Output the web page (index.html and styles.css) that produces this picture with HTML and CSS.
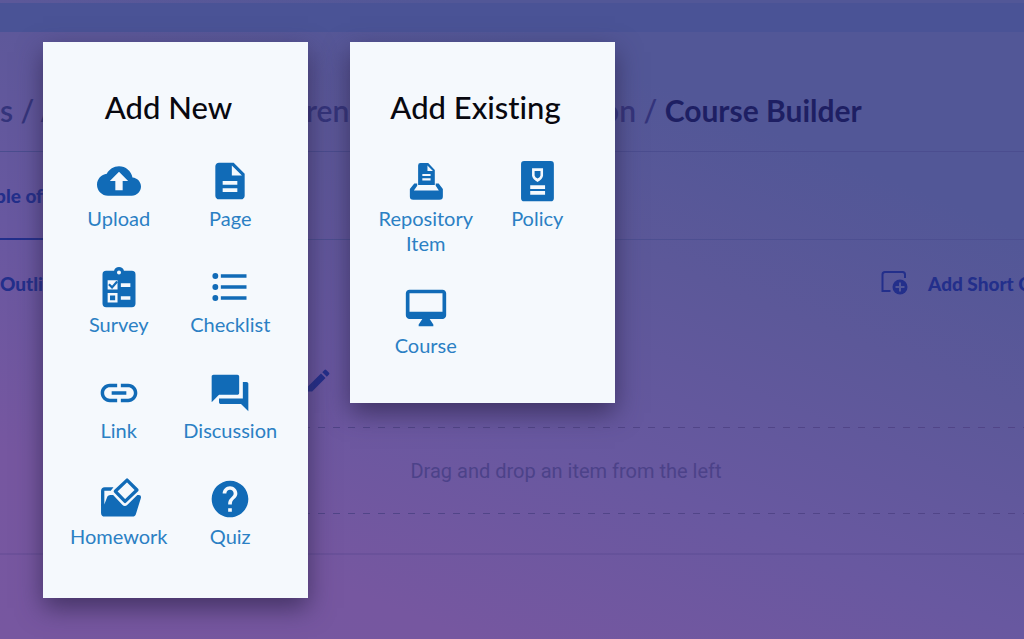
FILE: index.html
```html
<!DOCTYPE html>
<html lang="en">
<head>
<meta charset="utf-8">
<title>Course Builder</title>
<link rel="stylesheet" href="styles.css">
</head>
<body>
<div class="page">
  <div class="topbar"></div>
  <nav class="crumbs" aria-label="Breadcrumb">
    <span class="crumb">s / A</span>
    <span class="crumb">renc</span>
    <span class="crumb">on / <b class="current">Course Builder</b></span>
  </nav>
  <div class="tabs"><a class="tab" href="#">ble of</a></div>
  <div class="toolbar">
    <span class="outline">Outli</span>
    <button class="add-short" type="button">
      <svg class="add-icon" viewBox="0 0 27 24" fill="none" stroke="currentColor" stroke-width="2"><path d="M9.500 20H4L1.500 20V3.500Q1.500 1 4 1H21.500Q24 1 24 3.500V7"/><circle cx="19" cy="16" r="7.500" fill="currentColor" stroke="none"/><path d="M19 11.500v9M14.500 16h9" stroke="#525797"/></svg>
      Add Short C
    </button>
  </div>
  <section class="module">
    <div class="module-head">
      <svg class="pencil" viewBox="0 0 24 24" fill="currentColor"><path d="M3 17.250V21h3.750L17.810 9.940l-3.750-3.750L3 17.250zM20.710 7.040a1 1 0 0 0 0-1.410l-2.340-2.340a1 1 0 0 0-1.410 0l-1.830 1.830 3.750 3.750 1.830-1.830z"/></svg>
    </div>
    <div class="dropzone">Drag and drop an item from the left</div>
  </section>
</div>

<div class="menus">
  <section class="menu">
    <h2 class="menu-title">Add New</h2>
    <div class="grid">
      <button class="item" type="button"><svg class="icon" viewBox="0 0 24 24"><path d="M19.350 10.040C18.670 6.590 15.640 4 12 4 9.110 4 6.600 5.640 5.350 8.040 2.340 8.360 0 10.910 0 14c0 3.310 2.690 6 6 6h13c2.760 0 5-2.240 5-5 0-2.640-2.050-4.780-4.650-4.960zM14 12v5h-4v-5H7l5-5 5 5h-3z"/></svg>Upload</button>
      <button class="item" type="button"><svg class="icon" viewBox="0 0 24 24"><path d="M14 2H6c-1.100 0-2 .9-2 2v16c0 1.100.9 2 2 2h12c1.100 0 2-.9 2-2V8l-6-6zm2 16H8v-2h8v2zm0-4H8v-2h8v2zm-3-5V3.500L18.500 9H13z"/></svg>Page</button>
      <button class="item" type="button"><svg class="icon" viewBox="0 0 24 24"><path fill-rule="evenodd" d="M5 3.200H9.300A2.800 2.800 0 0 1 14.700 3.200H19A2 2 0 0 1 21 5.200V21A2 2 0 0 1 19 23H5A2 2 0 0 1 3 21V5.200A2 2 0 0 1 5 3.200zM12 3a1.100 1.100 0 1 0 0 2.200A1.100 1.100 0 0 0 12 3zM5.800 8.300H11.200V13.300H5.800zM5.800 15.300H11.200V20.500H5.800zM7.100 16.600V19.200H9.900V16.600zM13 10H18.200V12H13zM13 17H18.200V19H13z"/><path d="M6.500 10.500 8.200 12.200 11 9" fill="none" stroke="currentColor" stroke-width="1.200"/></svg>Survey</button>
      <button class="item" type="button"><svg class="icon" viewBox="0 0 24 24"><circle cx="4" cy="6" r="1.600"/><circle cx="4" cy="12" r="1.600"/><circle cx="4" cy="18" r="1.600"/><path d="M7 5h14v2H7zM7 11h14v2H7zM7 17h14v2H7z"/></svg>Checklist</button>
      <button class="item" type="button"><svg class="icon" viewBox="0 0 24 24"><path d="M3.900 12c0-1.710 1.390-3.100 3.100-3.100h4V7H7c-2.760 0-5 2.240-5 5s2.240 5 5 5h4v-1.900H7c-1.710 0-3.100-1.390-3.100-3.100zM8 13h8v-2H8v2zm9-6h-4v1.900h4c1.710 0 3.100 1.390 3.100 3.100s-1.390 3.100-3.100 3.100h-4V17h4c2.760 0 5-2.240 5-5s-2.240-5-5-5z"/></svg>Link</button>
      <button class="item" type="button"><svg class="icon" viewBox="0 0 24 24"><path d="M21 6h-2v9H6v2c0 .55.450 1 1 1h11l4 4V7c0-.55-.45-1-1-1zm-4 6V3c0-.55-.45-1-1-1H3c-.55 0-1 .45-1 1v14l4-4h10c.55 0 1-.45 1-1z"/></svg>Discussion</button>
      <button class="item" type="button"><svg class="icon" viewBox="0 0 24 24"><path d="M9 5.600H4.200C3 5.600 2.200 6.400 2.200 7.600V19.600c0 1.200.8 2 2 2H19.400c.9 0 1.500-.5 1.800-1.300L23.900 11.600c.3-1-.1-1.800-1.100-1.800h-.8L16.600 15.100a2 2 0 0 1-2.800 0L8.800 9.800H7.400C6.300 9.800 5.700 10.300 5.400 11.300L4 15V7.500H7.500z"/><path d="M16.400 1.700 21.800 7.100 15.300 13.300 10 7.800z" fill="none" stroke="currentColor" stroke-width="1.800" stroke-linejoin="round"/></svg>Homework</button>
      <button class="item" type="button"><svg class="icon" viewBox="0 0 24 24"><path d="M12 2C6.480 2 2 6.480 2 12s4.480 10 10 10 10-4.480 10-10S17.520 2 12 2zm1 17h-2v-2h2v2zm2.070-7.750l-.9.920C13.450 12.900 13 13.500 13 15h-2v-.5c0-1.100.45-2.100 1.170-2.830l1.240-1.260c.37-.36.590-.86.590-1.410 0-1.100-.9-2-2-2s-2 .9-2 2H8c0-2.210 1.790-4 4-4s4 1.790 4 4c0 .88-.36 1.680-.93 2.250z"/></svg>Quiz</button>
    </div>
  </section>
  <section class="menu menu-short">
    <h2 class="menu-title">Add Existing</h2>
    <div class="grid">
      <button class="item" type="button"><svg class="icon" viewBox="0 0 24 24"><path fill-rule="evenodd" d="M9 2.200H13.200L16.800 6V14.200H7.700V3.500A1.300 1.300 0 0 1 9 2.200zM12.800 3.500V6.600H15.800zM10 8.200V9.300H14.500V8.200zM10 10.500V11.700H14.500V10.500z"/><path d="M5.600 13.300H7.200V14.600L5.400 17.200H19L17.300 14.600V13.300H18.900L21.200 16.300V20.400A1.800 1.800 0 0 1 19.400 22.200H5A1.800 1.800 0 0 1 3.200 20.400V16.300z"/></svg>Repository Item</button>
      <button class="item" type="button"><svg class="icon" viewBox="0 0 24 24"><path fill-rule="evenodd" d="M5 1.100H19.500A1.700 1.700 0 0 1 21.200 2.800V21.400A1.700 1.700 0 0 1 19.500 23.100H5A1.700 1.700 0 0 1 3.300 21.400V2.800A1.700 1.700 0 0 1 5 1.100zM9.300 5.100V9.200Q9.500 11 12.300 12.500Q15.100 11 15.300 9.200V5.100zM10.700 6.600H13.900V9Q13.700 10 12.300 10.700Q10.900 10 10.700 9zM8.300 14.300V16.300H16.400V14.300zM8.300 17.500V19.500H16.400V17.500z"/></svg>Policy</button>
      <button class="item" type="button"><svg class="icon" viewBox="0 0 24 24"><path d="M21 2H3c-1.100 0-2 .9-2 2v12c0 1.100.9 2 2 2h7l-2 3v1h8v-1l-2-3h7c1.100 0 2-.9 2-2V4c0-1.100-.9-2-2-2zm0 12H3V4h18v10z"/></svg>Course</button>
    </div>
  </section>
</div>
</body>
</html>
```
FILE: styles.css
```css
* { box-sizing: border-box; }

body {
  margin: 0;
  min-height: 100vh;
  overflow: hidden;
  font-family: Lato, "Open Sans", sans-serif;
  font-variant-ligatures: none;
  background: linear-gradient(202deg, #525797 22%, #5c5899 39%, #6858a0 60%, #7657a0 82%, #7757a0);
}

button { padding: 0; border: 0; background: none; font: inherit; color: inherit; }

.page { overflow: hidden; white-space: nowrap; }

.topbar { height: 29px; margin-top: 3px; background: #4a5396; }

.crumbs {
  display: grid;
  grid-template-columns: 306px 296px 1fr;
  align-items: center;
  height: 120px;
  padding-top: 36px;
  border-bottom: 1px solid #4b4d8f;
  font-size: 30px;
  line-height: 40px;
  font-weight: 600;
  color: #34347b;
}
.current { font-weight: 700; color: #1e1f63; }

.tabs {
  display: flex;
  height: 88px;
  border-bottom: 1px solid #4d4f91;
}
.tab {
  display: flex;
  align-items: center;
  width: 43px;
  height: 88px;
  justify-content: flex-end;
  border-bottom: 2px solid #232f8b;
  font-size: 19px;
  font-weight: 900;
  color: #232f8b;
  text-decoration: none;
}

.toolbar {
  display: flex;
  justify-content: space-between;
  align-items: center;
  height: 86px;
  font-size: 19px;
  font-weight: 900;
  color: #232f8b;
}
.add-short { display: flex; align-items: center; gap: 20px; width: 143px; }
.add-icon { flex: none; width: 27px; height: 24px; }

.module {
  padding-left: 108px;
  padding-bottom: 39px;
  border-bottom: 2px solid rgba(70, 60, 130, .2);
}
.module-head { display: flex; height: 101px; padding: 40px 0 0 196px; }
.pencil { width: 29px; height: 29px; color: #232f8b; }

.dropzone {
  display: flex;
  align-items: center;
  justify-content: center;
  height: 87px;
  font-family: Roboto, sans-serif;
  font-size: 20px;
  line-height: 24px;
  color: #4c4289;
  background:
    repeating-linear-gradient(90deg, #514588 0 7px, transparent 7px 15px) top / 100% 1px no-repeat,
    repeating-linear-gradient(90deg, #514588 0 7px, transparent 7px 15px) bottom / 100% 1px no-repeat;
}

.menus {
  position: absolute;
  top: 42px;
  left: 43px;
  display: flex;
  align-items: flex-start;
  gap: 42px;
}
.menu {
  width: 265px;
  padding: 45px 22px 45px 20px;
  background: #f5f9fd;
  box-shadow: 0 10px 24px rgba(45, 35, 75, .7);
}
.menu-short { padding-bottom: 41px; }
.menu-title {
  margin: 0 0 32px;
  padding-right: 12px;
  font-size: 31px;
  line-height: 40px;
  font-weight: 500;
  text-align: center;
  color: #08080f;
}
.grid { display: grid; grid-template-columns: 1fr 1fr; row-gap: 30px; }
.item {
  display: flex;
  flex-direction: column;
  align-items: center;
  min-height: 76px;
  font-size: 20px;
  line-height: 25px;
  color: #2b80c4;
}
.icon { width: 44px; height: 44px; margin-bottom: 3px; fill: currentColor; color: #116bb7; }
```
